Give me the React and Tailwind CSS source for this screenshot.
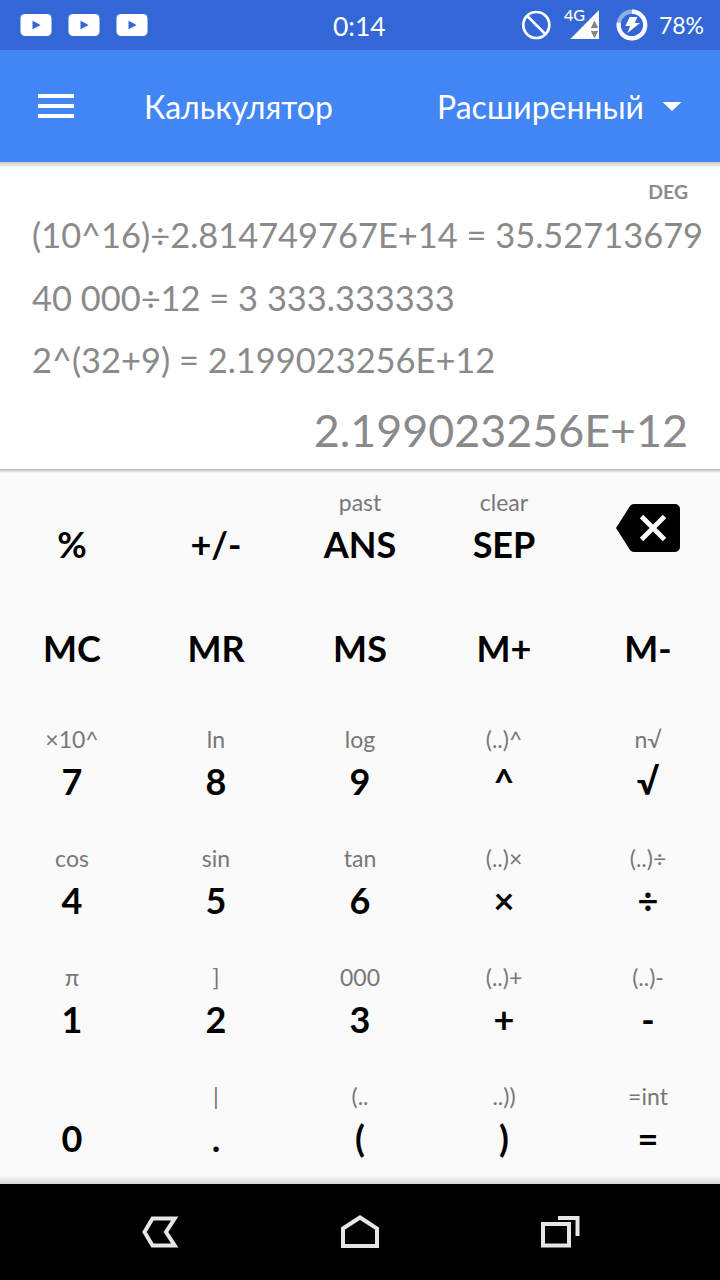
const rows = [
  { height: 'h-[104px]', keys: [['', '%'], ['', '+/-'], ['past', 'ANS'], ['clear', 'SEP'], ['', 'backspace']] },
  { height: 'h-[133.4px]', keys: [['', 'MC'], ['', 'MR'], ['', 'MS'], ['', 'M+'], ['', 'M-']] },
  { height: 'h-[118.8px]', keys: [['×10^', '7'], ['ln', '8'], ['log', '9'], ['(..)^', '^'], ['n√', '√']] },
  { height: 'h-[118.7px]', keys: [['cos', '4'], ['sin', '5'], ['tan', '6'], ['(..)×', '×'], ['(..)÷', '÷']] },
  { height: 'h-[118.8px]', keys: [['π', '1'], [']', '2'], ['000', '3'], ['(..)+', '+'], ['(..)-', '-']] },
  { height: 'h-[84px]', keys: [['', '0'], ['|', '.'], ['(..', '('], ['..))', ')'], ['=int', '=']] },
];

const history = [
  '(10^16)÷2.814749767E+14 = 35.52713679',
  '40 000÷12 = 3 333.333333',
  '2^(32+9) = 2.199023256E+12',
];

function VideoIcon() {
  return (
    <svg className="h-[22px] w-8" viewBox="0 0 32 22">
      <rect x="0.5" width="31" height="22" rx="4.5" fill="#fff" />
      <path d="M12.5 6.8v8.4l8-4.2z" fill="#3367d6" />
    </svg>
  );
}

function BackspaceIcon() {
  return (
    <svg className="mt-4 h-12 w-16" viewBox="0 0 64 48">
      <path d="M18 0h41a5 5 0 0 1 5 5v38a5 5 0 0 1-5 5H18q-2.500 0-4-2L0 24 14 2q1.500-2 4-2z" fill="#000" />
      <path d="M25.500 12.500l23 23m0-23l-23 23" stroke="#fafafa" strokeWidth="4.800" />
    </svg>
  );
}

function StatusBar() {
  return (
    <div className="flex h-[50px] shrink-0 items-center bg-[#3367d6] pl-5 pr-4 text-white">
      <div className="flex w-[313px] gap-4">
        <VideoIcon />
        <VideoIcon />
        <VideoIcon />
      </div>
      <span className="pt-[2px] text-[26.500px] leading-8">0:14</span>
      <div className="ml-auto flex items-center">
        <svg className="h-[50px] w-[138px]" viewBox="0 0 138 50">
          <circle cx="16.300" cy="25" r="13" fill="none" stroke="#fff" strokeWidth="2.700" />
          <path d="M7 15.800l18.600 18.600" stroke="#fff" strokeWidth="2.700" />
          <text x="44" y="20.500" fill="#fff" stroke="#fff" strokeWidth="0.150" fontSize="16">4G</text>
          <path d="M79 10v29H50.300z" fill="#fff" />
          <path d="M70.800 28l3.700-7.500 3.700 7.500zM70.800 31l3.700 7.500 3.700-7.500z" fill="#858585" />
          <circle cx="112" cy="25" r="13.300" fill="none" stroke="#94aee9" strokeWidth="4.200" />
          <path d="M112 11.700a13.300 13.300 0 1 1-13.200 11" fill="none" stroke="#fff" strokeWidth="4.200" />
          <path d="M109.800 17h7.600l-2.600 6h5.200L107.500 33l2.600-7h-4.800z" fill="#fff" />
        </svg>
        <span className="ml-[1px] text-[23px] leading-8">78%</span>
      </div>
    </div>
  );
}

function Key({ label, value }) {
  return (
    <div className="flex flex-col items-center">
      {value === 'backspace' ? (
        <BackspaceIcon />
      ) : (
        <>
          <span className="mb-1.5 h-7 whitespace-pre text-[23px] leading-7 text-[#777]">{label}</span>
          <span className="h-11 text-[36px] font-bold leading-[44px] text-black">{value}</span>
        </>
      )}
    </div>
  );
}

export default function App() {
  return (
    <div className="flex h-[1280px] w-[720px] flex-col overflow-hidden bg-[#fafafa] font-['Lato','Noto_Sans',sans-serif]">
      <StatusBar />
      <header className="flex h-28 shrink-0 items-center bg-[#4285f4] pl-[38px] pr-[38px] text-[32px] leading-10 text-white">
        <div className="flex w-9 flex-col gap-1.5">
          <span className="h-1 bg-white" />
          <span className="h-1 bg-white" />
          <span className="h-1 bg-white" />
        </div>
        <h1 className="ml-[70px] pt-px">Калькулятор</h1>
        <div className="ml-auto flex items-center">
          <span className="pt-px">Расширенный</span>
          <svg className="ml-[18px] h-[10px] w-5" viewBox="0 0 20 10">
            <path d="M0.500 1h19L10 10z" fill="#fff" />
          </svg>
        </div>
      </header>
      <section className="flex h-[307px] shrink-0 flex-col bg-white text-[#8a8a8a]">
        <div className="h-1.5 shrink-0 bg-linear-to-b from-[#c8c8c8] to-white" />
        <div className="mt-3 h-6 self-end pr-8 text-[19.400px] font-bold leading-6">DEG</div>
        <div className="pl-8 pt-[0.4px]">
          {history.map((line) => (
            <div key={line} className="h-[62.5px] whitespace-nowrap text-[34.430px] leading-[62.5px]">{line}</div>
          ))}
        </div>
        <div className="mt-[11.6px] self-end pr-8 text-[44.800px] leading-[54px]">2.199023256E+12</div>
      </section>
      <main className="flex h-[715px] shrink-0 flex-col">
        <div className="h-1 shrink-0 bg-linear-to-b from-[#b8b8b8] to-[#fafafa]" />
        <div className="pt-[15px]">
          {rows.map((row) => (
            <div key={row.keys[0][1]} className={`grid grid-cols-5 ${row.height}`}>
              {row.keys.map(([label, value]) => (
                <Key key={value} label={label} value={value} />
              ))}
            </div>
          ))}
        </div>
        <div className="mt-auto h-2 shrink-0 bg-linear-to-b from-[#fafafa] to-[#d6d6d6]" />
      </main>
      <nav className="flex h-24 shrink-0 items-center bg-black">
        <svg className="h-24 w-full" viewBox="0 0 720 96" fill="none" stroke="#e6e6e6" strokeWidth="4">
          <path d="M152.500 34.500h22.200L166 48l8.700 13.500h-22.200L144.500 48z" />
          <path d="M343 44.500l17-11 17 11V62h-34z" />
          <path d="M543 40h26v21.500h-26zM558 34h19.500v18" />
        </svg>
      </nav>
    </div>
  );
}
